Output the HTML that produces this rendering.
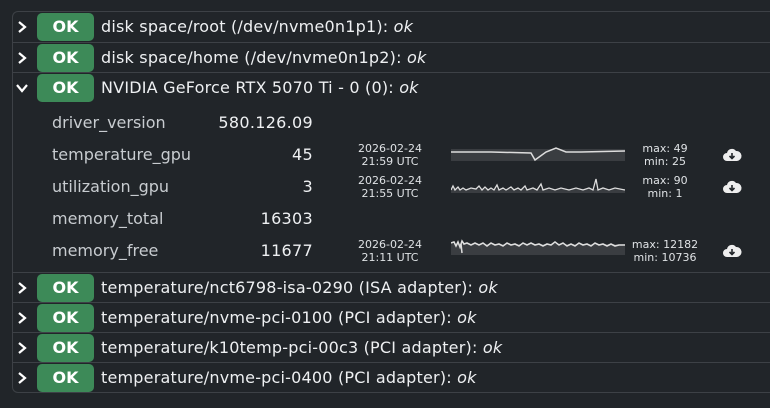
<!DOCTYPE html>
<html><head><style>
body{margin:0;width:770px;height:408px;background:#212529;font-family:"DejaVu Sans","Liberation Sans",sans-serif;color:#e9ecef;overflow:hidden;position:relative}
.box{position:absolute;left:12px;top:11px;width:770px;height:380px;border:1px solid #3d4146;border-radius:6px;border-right:none}
.row{position:absolute;left:12px;width:760px;height:30px;border-top:1px solid #3d4146}
.chev{position:absolute;left:4px;top:9px;width:12px;height:12px}
.ok{position:absolute;left:25px;top:1px;width:57px;height:28px;background:#3d8a58;border-radius:5px;color:#fff;font-weight:bold;font-size:16px;text-align:center;line-height:28px}
.t{position:absolute;left:89px;top:0;line-height:30px;font-size:16px;letter-spacing:0.2px;color:#eef0f2;white-space:nowrap}
.lbl{position:absolute;left:52px;font-size:16px;color:#c8ccd0}
.val{position:absolute;right:457px;font-size:16px;color:#eef0f2;letter-spacing:0.3px}
.ts{position:absolute;left:345px;width:90px;text-align:center;font-size:11px;line-height:13px;color:#dfe2e5}
.mm{position:absolute;left:620px;width:90px;text-align:center;font-size:11px;line-height:13px;color:#dfe2e5}
.sp{position:absolute;left:451px;width:174px;height:18px}
.cl{position:absolute;left:722px;width:20px;height:16px}
</style></head><body>
<div class="box"></div>
<div class="row" style="top:12px;border-top:none"><svg class="chev" viewBox="0 0 12 12"><path d="M3 1l6 5-6 5" stroke="#fff" stroke-width="2.2" fill="none"/></svg><div class="ok">OK</div><div class="t">disk space/root (/dev/nvme0n1p1): <i>ok</i></div></div>
<div class="row" style="top:42px"><svg class="chev" viewBox="0 0 12 12"><path d="M3 1l6 5-6 5" stroke="#fff" stroke-width="2.2" fill="none"/></svg><div class="ok">OK</div><div class="t">disk space/home (/dev/nvme0n1p2): <i>ok</i></div></div>
<div class="row" style="top:72px"><svg class="chev" viewBox="0 0 12 12"><path d="M1 3l5 6 5-6" stroke="#fff" stroke-width="2.2" fill="none"/></svg><div class="ok">OK</div><div class="t">NVIDIA GeForce RTX 5070 Ti - 0 (0): <i>ok</i></div></div>

<div class="lbl" style="top:113px">driver_version</div><div class="val" style="top:113px">580.126.09</div>
<div class="lbl" style="top:145px">temperature_gpu</div><div class="val" style="top:145px">45</div>
<div class="lbl" style="top:177px">utilization_gpu</div><div class="val" style="top:177px">3</div>
<div class="lbl" style="top:209px">memory_total</div><div class="val" style="top:209px">16303</div>
<div class="lbl" style="top:241px">memory_free</div><div class="val" style="top:241px">11677</div>

<div class="ts" style="top:142px">2026-02-24<br>21:59 UTC</div>
<svg class="sp" style="top:144px" viewBox="0 0 174 18"><rect x="0" y="5" width="174" height="12" fill="#3a3d41"/><path d="M0 8 L40 8 L80 9 L84 16 L95 8 L105 4 L115 8 L130 8 L174 7" stroke="#ddd" stroke-width="1.5" fill="none"/></svg>
<div class="mm" style="top:142px">max: 49<br>min: 25</div>
<svg class="cl" style="top:147px" viewBox="0 0 20 16"><path d="M5 14a4 4 0 0 1 0-8 5 5 0 0 1 9-2 4 4 0 0 1 1 10z" fill="#eee"/><path d="M10 6v5M7.5 9l2.5 2.5 2.5-2.5" stroke="#212529" stroke-width="1.6" fill="none"/></svg>

<div class="ts" style="top:174px">2026-02-24<br>21:55 UTC</div>
<svg class="sp" style="top:176px" viewBox="0 0 174 18"><rect x="0" y="13" width="174" height="4" fill="#3a3d41"/><path d="M0 14 L2 10 L4 14 L7 11 L9 14 L12 12 L15 14 L20 12 L25 13 L28 10 L31 14 L34 11 L37 14 L40 12 L43 14 L46 9 L48 14 L52 12 L55 14 L60 11 L63 14 L67 12 L70 14 L74 10 L76 14 L82 12 L86 14 L90 8 L92 14 L98 12 L104 14 L110 12 L118 14 L125 12 L132 14 L138 12 L142 14 L145 3 L147 14 L152 12 L158 14 L164 12 L174 14" stroke="#ddd" stroke-width="1.3" fill="none"/></svg>
<div class="mm" style="top:174px">max: 90<br>min: 1</div>
<svg class="cl" style="top:179px" viewBox="0 0 20 16"><path d="M5 14a4 4 0 0 1 0-8 5 5 0 0 1 9-2 4 4 0 0 1 1 10z" fill="#eee"/><path d="M10 6v5M7.5 9l2.5 2.5 2.5-2.5" stroke="#212529" stroke-width="1.6" fill="none"/></svg>

<div class="ts" style="top:238px">2026-02-24<br>21:11 UTC</div>
<svg class="sp" style="top:238px" viewBox="0 0 174 18"><rect x="0" y="6" width="174" height="11" fill="#3a3d41"/><path d="M0 5 L3 4 L5 8 L7 4 L9 9 L11 3 L13 6 L16 5 L20 7 L24 5 L28 7 L32 5 L36 8 L40 5 L44 7 L48 6 L52 8 L56 5 L60 7 L64 6 L68 8 L72 5 L76 7 L80 5 L84 7 L88 6 L92 8 L96 6 L100 7 L104 4 L108 7 L112 5 L116 8 L120 6 L124 8 L128 5 L132 7 L136 6 L140 8 L144 5 L148 7 L152 6 L156 8 L160 6 L164 8 L168 7 L174 7" stroke="#ddd" stroke-width="1.6" fill="none"/><path d="M10 6 L11 15" stroke="#ddd" stroke-width="1.5"/></svg>
<div class="mm" style="top:238px">max: 12182<br>min: 10736</div>
<svg class="cl" style="top:243px" viewBox="0 0 20 16"><path d="M5 14a4 4 0 0 1 0-8 5 5 0 0 1 9-2 4 4 0 0 1 1 10z" fill="#eee"/><path d="M10 6v5M7.5 9l2.5 2.5 2.5-2.5" stroke="#212529" stroke-width="1.6" fill="none"/></svg>

<div class="row" style="top:272px"><svg class="chev" viewBox="0 0 12 12"><path d="M3 1l6 5-6 5" stroke="#fff" stroke-width="2.2" fill="none"/></svg><div class="ok">OK</div><div class="t">temperature/nct6798-isa-0290 (ISA adapter): <i>ok</i></div></div>
<div class="row" style="top:302px"><svg class="chev" viewBox="0 0 12 12"><path d="M3 1l6 5-6 5" stroke="#fff" stroke-width="2.2" fill="none"/></svg><div class="ok">OK</div><div class="t">temperature/nvme-pci-0100 (PCI adapter): <i>ok</i></div></div>
<div class="row" style="top:332px"><svg class="chev" viewBox="0 0 12 12"><path d="M3 1l6 5-6 5" stroke="#fff" stroke-width="2.2" fill="none"/></svg><div class="ok">OK</div><div class="t">temperature/k10temp-pci-00c3 (PCI adapter): <i>ok</i></div></div>
<div class="row" style="top:362px"><svg class="chev" viewBox="0 0 12 12"><path d="M3 1l6 5-6 5" stroke="#fff" stroke-width="2.2" fill="none"/></svg><div class="ok">OK</div><div class="t">temperature/nvme-pci-0400 (PCI adapter): <i>ok</i></div></div>
</body></html>
